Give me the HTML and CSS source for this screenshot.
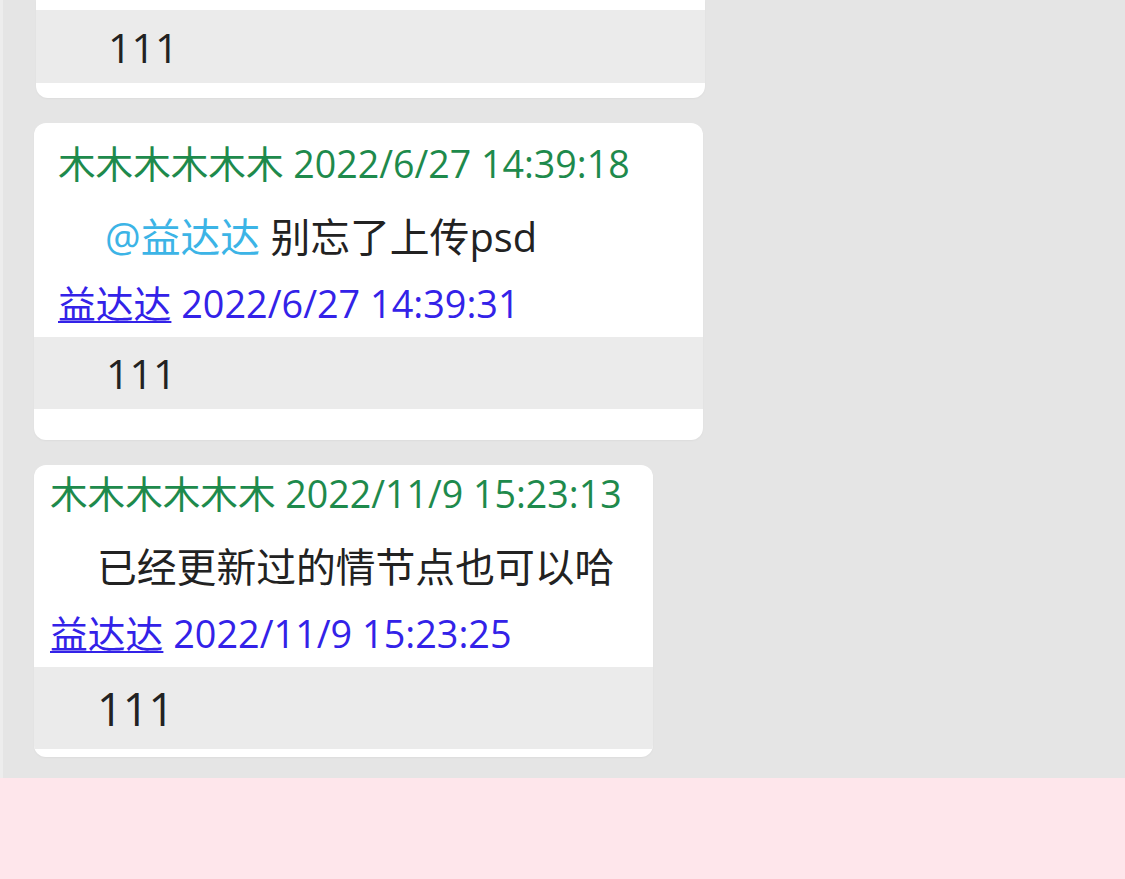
FILE: index.html
```html
<!DOCTYPE html>
<html lang="zh-CN">
<head>
<meta charset="utf-8">
<title>回复列表</title>
<link rel="stylesheet" href="styles.css">
</head>
<body>
<div class="panel">
  <div class="list">
    <div class="card card-first">
      <div class="reply-body reply-body-first">111</div>
    </div>

    <div class="card card-a">
      <div class="head">木木木木木木 2022/6/27 14:39:18</div>
      <div class="msg"><span class="at">@益达达</span> 别忘了上传psd</div>
      <div class="reply-head"><span class="link">益达达</span> 2022/6/27 14:39:31</div>
      <div class="reply-body reply-body-a">111</div>
    </div>

    <div class="card card-b">
      <div class="head">木木木木木木 2022/11/9 15:23:13</div>
      <div class="msg">已经更新过的情节点也可以哈</div>
      <div class="reply-head"><span class="link">益达达</span> 2022/11/9 15:23:25</div>
      <div class="reply-body reply-body-b">111</div>
    </div>
  </div>
</div>
<div class="footer"></div>
</body>
</html>
```

FILE: styles.css
```css
html, body {
  margin: 0;
  padding: 0;
}

body {
  font-family: "Open Sans", "Noto Sans CJK SC", sans-serif;
  background: #fee6eb;
  color: #222;
}

.panel {
  height: 778px;
  background: #e5e5e5;
  border-left: 3px solid #ededed;
  overflow: hidden;
}

.list {
  display: flex;
  flex-direction: column;
  align-items: flex-start;
  gap: 25px;
  padding-left: 31px;
}

.card {
  background: #ffffff;
  border-radius: 12px;
  overflow: hidden;
  box-shadow: 0 1px 2px rgba(0, 0, 0, 0.04);
}

.card-first {
  width: 669px;
  margin-left: 2px;
  padding-top: 10px;
  padding-bottom: 15px;
  border-top-left-radius: 0;
  border-top-right-radius: 0;
}

.card-a {
  width: 669px;
  padding-top: 17px;
  padding-bottom: 31px;
  --pad: 24px;
}

.card-b {
  width: 619px;
  padding-top: 5px;
  padding-bottom: 8px;
  --pad: 16px;
}

.head {
  padding-left: var(--pad);
  font-size: 37.6px;
  line-height: 48px;
  color: #1e8a4c;
  white-space: nowrap;
}

.msg {
  margin-top: 25px;
  padding-left: calc(var(--pad) + 47px);
  font-size: 39.8px;
  line-height: 48px;
  color: #222;
  white-space: nowrap;
}

.at {
  color: #3cb4e6;
}

.reply-head {
  margin-top: 19px;
  padding-left: var(--pad);
  font-size: 37.8px;
  line-height: 48px;
  color: #3322e8;
  white-space: nowrap;
}

.link {
  text-decoration: underline;
  text-underline-offset: 3px;
  text-decoration-thickness: 2px;
}

.reply-body {
  margin-top: 9px;
  background: #ebebeb;
  font-size: 41px;
  color: #222;
  display: flex;
  align-items: center;
}

.reply-body-first {
  margin-top: 0;
  height: 73px;
  padding-left: 72px;
}

.reply-body-a {
  height: 72px;
  padding-left: 72px;
}

.reply-body-b {
  height: 82px;
  padding-left: 63px;
  font-size: 45px;
}

.footer {
  height: 101px;
  background: #fee6eb;
}
```
